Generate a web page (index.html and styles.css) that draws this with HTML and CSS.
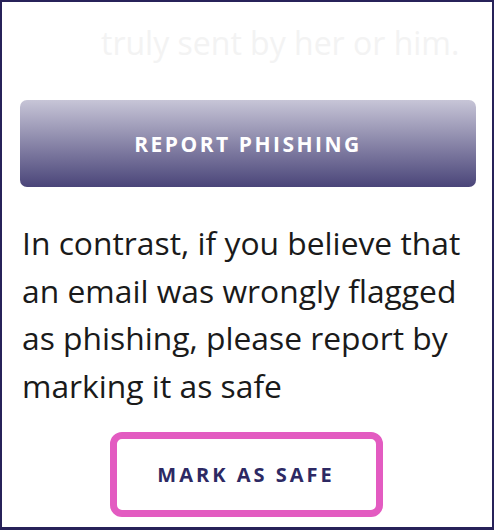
FILE: index.html
```html
<!DOCTYPE html>
<html lang="en">
<head>
    <meta charset="UTF-8">
    <meta name="viewport" content="width=device-width, initial-scale=1.0">
    <title>Report Phishing</title>
    <link rel="stylesheet" href="styles.css">
</head>
<body>
    <div class="frame">
        <!-- Previous paragraph, faded out -->
        <p class="faded">truly sent by her or him.</p>

        <button class="report-btn">REPORT PHISHING</button>

        <p class="info">In contrast, if you believe that an email was wrongly flagged as phishing, please report by marking it as safe</p>

        <div class="safe-row">
            <button class="safe-btn">MARK AS SAFE</button>
        </div>
    </div>
</body>
</html>
```

FILE: styles.css
```css
html, body {
    margin: 0;
    padding: 0;
    background: #ffffff;
}
.frame {
    box-sizing: border-box;
    width: 494px;
    height: 530px;
    border: 2px solid #272259;
    border-bottom-width: 3px;
    padding: 0 16px 0 18px;
    overflow: hidden;
    font-family: "Open Sans", sans-serif;
}
.faded {
    margin: 20px 0 0 81px;
    font-size: 32px;
    line-height: 42px;
    color: #f3f3f3;
}
.report-btn {
    display: block;
    width: 100%;
    height: 87px;
    margin-top: 36px;
    border: none;
    border-radius: 7px;
    background: linear-gradient(to bottom, #c7c5d7, #4a4579);
    color: #ffffff;
    font-family: "Open Sans", sans-serif;
    font-weight: 700;
    font-size: 21px;
    letter-spacing: 2.5px;
    cursor: pointer;
}
.info {
    margin: 32px 0 0 2px;
    font-size: 31.8px;
    line-height: 47.5px;
    color: #1a1a1a;
}
.safe-row {
    display: flex;
    justify-content: center;
    margin-top: 23px;
    padding-right: 4px;
}
.safe-btn {
    box-sizing: border-box;
    width: 273px;
    height: 85px;
    border: 7px solid #e35bc1;
    border-radius: 12px;
    background: #ffffff;
    color: #2d2963;
    font-family: "Open Sans", sans-serif;
    font-weight: 700;
    font-size: 20px;
    letter-spacing: 3px;
    cursor: pointer;
}
```
